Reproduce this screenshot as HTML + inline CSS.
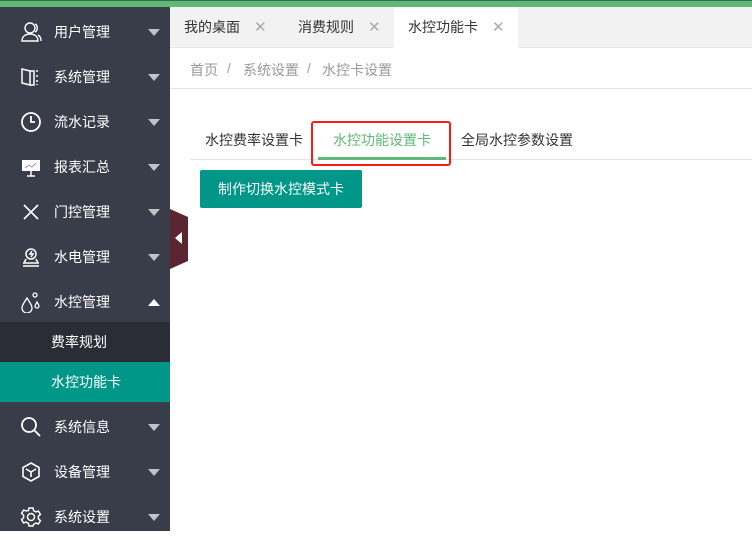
<!DOCTYPE html><html><head><meta charset="utf-8"><style>
*{margin:0;padding:0;box-sizing:border-box}
body{width:752px;height:531px;overflow:hidden;background:#fff;font-family:"Liberation Sans","Noto Sans CJK SC",sans-serif;position:relative;font-size:14px}
.top{position:absolute;left:0;top:0;width:752px;height:7px;background:#5fb878;border-top:1px solid #3d6b4a}
.side{position:absolute;left:0;top:7px;width:170px;height:524px;background:#393d49}
.it{position:absolute;left:0;width:170px;height:45px;color:#fff;font-size:14px}
.it .t{position:absolute;left:54px;top:50%;transform:translateY(-50%)}
.it .ic{position:absolute;left:20px;top:50%;transform:translateY(-50%);width:22px;height:22px}
.it .ar{position:absolute;left:148px;top:50%;margin-top:-3px;border-left:6px solid transparent;border-right:6px solid transparent;border-top:7px solid #c2c2c2}
.it .up{border-top:none;border-bottom:7px solid #fff}
.sub{position:absolute;left:0;width:170px;height:40px;color:#fff;font-size:14px;line-height:40px;padding-left:51px}
.tabs{position:absolute;left:170px;top:7px;width:582px;height:41px;background:#f2f2f2;border-bottom:1px solid #e6e6e6}
.tab{position:absolute;top:0;height:41px;line-height:41px;color:#333;font-size:14px}
.x{color:#aaa;margin-left:14px;font-size:15px}
.bc{position:absolute;top:60px;color:#999;font-size:14px}
.bcline{position:absolute;left:170px;top:88px;width:582px;height:1px;background:#e6e6e6}
.ct{position:absolute;top:130px;font-size:14px;color:#333}
</style></head><body>
<div class="top"></div>
<div class="side">
 <div class="it" style="top:2px"><svg class="ic" viewBox="0 0 22 22" fill="none" stroke="#fff" stroke-width="1.4"><circle cx="10" cy="7" r="5"/><path d="M2 20c0-5 4-7 8-7s8 2 8 7z"/><path d="M15 3c3 1 3 7 0 8M18 14c2 1 3 3 3 6"/></svg><span class="t">用户管理</span><i class="ar"></i></div>
 <div class="it" style="top:47px"><svg class="ic" viewBox="0 0 22 22" fill="none" stroke="#fff" stroke-width="1.5"><path d="M2 3l8 2v14l-8-2z"/><path d="M10 5h4v14h-4M17 4v2M17 9v2M17 14v2M17 18v1"/></svg><span class="t">系统管理</span><i class="ar"></i></div>
 <div class="it" style="top:92px"><svg class="ic" viewBox="0 0 22 22" fill="none" stroke="#fff" stroke-width="1.8"><circle cx="11" cy="11" r="9"/><path d="M11 5v6h4"/></svg><span class="t">流水记录</span><i class="ar"></i></div>
 <div class="it" style="top:137px"><svg class="ic" viewBox="0 0 22 22"><rect x="2" y="4" width="18" height="11" fill="#fff"/><path d="M5 12l4-3 3 2 4-4" stroke="#999" fill="none"/><path d="M11 15v5M7 20h8" stroke="#fff" stroke-width="1.5"/></svg><span class="t">报表汇总</span><i class="ar"></i></div>
 <div class="it" style="top:182px"><svg class="ic" viewBox="0 0 22 22" stroke="#fff" stroke-width="1.6"><path d="M4 4l14 14M18 4L4 18"/></svg><span class="t">门控管理</span><i class="ar"></i></div>
 <div class="it" style="top:227px"><svg class="ic" viewBox="0 0 22 22" fill="none" stroke="#fff" stroke-width="1.5"><circle cx="11" cy="8" r="5"/><path d="M12 5l-2 3h3l-2 3"/><path d="M3 17h16M3 20h16M6 13l-2 4M16 13l2 4"/></svg><span class="t">水电管理</span><i class="ar"></i></div>
 <div class="it" style="top:272px"><svg class="ic" viewBox="0 0 22 22" fill="none" stroke="#fff" stroke-width="1.3"><path d="M7 7c-3 5-5 7-5 10a5 5 0 0010 0c0-3-2-5-5-10z"/><circle cx="15" cy="4" r="2"/><path d="M17 11c-1 2-2 3-2 4a2 2 0 004 0c0-1-1-2-2-4z"/></svg><span class="t">水控管理</span><i class="ar up"></i></div>
 <div class="sub" style="top:315px;background:#2a2d36">费率规划</div>
 <div class="sub" style="top:355px;background:#009688">水控功能卡</div>
 <div class="it" style="top:397px"><svg class="ic" viewBox="0 0 22 22" fill="none" stroke="#fff" stroke-width="1.8"><circle cx="9" cy="9" r="7"/><path d="M14 14l6 6"/></svg><span class="t">系统信息</span><i class="ar"></i></div>
 <div class="it" style="top:442px"><svg class="ic" viewBox="0 0 22 22" fill="none" stroke="#fff" stroke-width="1.6"><path d="M11 2l8 4.5v9L11 20l-8-4.5v-9z"/><path d="M6 8l5 3 5-3M11 11v5"/></svg><span class="t">设备管理</span><i class="ar"></i></div>
 <div class="it" style="top:487px"><svg class="ic" viewBox="0 0 22 22" fill="none" stroke="#fff" stroke-width="1.5"><circle cx="11" cy="11" r="3.5"/><path d="M9 2h4l.6 2.6 2.3 1.3 2.5-.9 2 3.4-2 1.8v2.6l2 1.8-2 3.4-2.5-.9-2.3 1.3L13 20H9l-.6-2.6-2.3-1.3-2.5.9-2-3.4 2-1.8V9.2l-2-1.8 2-3.4 2.5.9L8.4 4.6z"/></svg><span class="t">系统设置</span><i class="ar"></i></div>
</div>
<svg style="position:absolute;left:170px;top:209px" width="19" height="60"><path d="M0 0L18 8V52L0 60z" fill="#5a2530"/><path d="M12 23v12l-7-6z" fill="#fff"/></svg>
<div class="tabs">
 <div class="tab" style="left:14px">我的桌面<span class="x">✕</span></div>
 <div class="tab" style="left:128px">消费规则<span class="x">✕</span></div>
 <div class="tab" style="left:224px;width:124px;background:#fff;padding-left:14px;height:42px">水控功能卡<span class="x">✕</span></div>
</div>
<div class="bc" style="left:190px">首页</div>
<div class="bc" style="left:227px">/</div>
<div class="bc" style="left:243px">系统设置</div>
<div class="bc" style="left:307px">/</div>
<div class="bc" style="left:322px">水控卡设置</div>
<div class="bcline"></div>
<div class="ct" style="left:205px">水控费率设置卡</div>
<div class="ct" style="left:333px;color:#5fb878">水控功能设置卡</div>
<div class="ct" style="left:461px">全局水控参数设置</div>
<div style="position:absolute;left:190px;top:159px;width:562px;height:1px;background:#e6e6e6"></div>
<div style="position:absolute;left:318px;top:157px;width:128px;height:3px;background:#5fb878"></div>
<div style="position:absolute;left:311px;top:121px;width:140px;height:45px;border:2px solid #ff1a1a;border-radius:3px"></div>
<div style="position:absolute;left:200px;top:170px;width:162px;height:38px;background:#009688;color:#fff;border-radius:2px;text-align:center;line-height:38px;font-size:14px">制作切换水控模式卡</div>
</body></html>
